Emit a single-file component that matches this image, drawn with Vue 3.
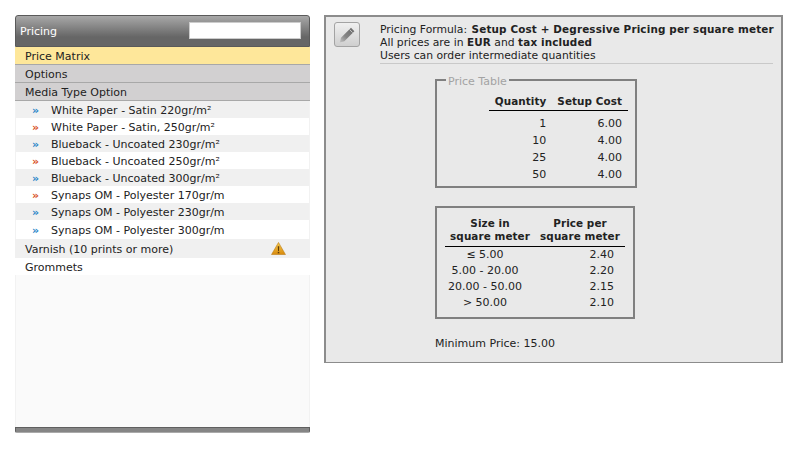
<template>
  <div class="page">
    <!-- left menu -->
    <div class="sidebar">
      <div class="side-head">
        <span class="side-title">Pricing</span>
        <input class="side-search" type="text" />
      </div>
      <div class="menu-row active">Price Matrix</div>
      <div class="menu-row group">Options</div>
      <div class="menu-row group">Media Type Option</div>
      <div v-for="(m, i) in media" :key="m.name" class="media-row" :class="{ odd: i % 2 == 0, tall: i == 7 }">
        <span class="arrows" :class="m.color">»</span>
        <span>{{ m.name }}</span>
      </div>
      <div class="plain-row odd">
        <span>Varnish (10 prints or more)</span>
        <svg class="warn" width="15" height="13" viewBox="0 0 16 14">
          <defs>
            <linearGradient id="warnfill" x1="0" y1="0" x2="0" y2="1">
              <stop offset="0" stop-color="#f6c94e" />
              <stop offset="1" stop-color="#d88a0c" />
            </linearGradient>
          </defs>
          <path d="M8 .5 15.5 13.5H.5Z" fill="url(#warnfill)" stroke="#b8770c" stroke-width=".6" stroke-linejoin="round" />
          <path d="M7.2 4.5h1.6L8.5 9.8h-1Z" fill="#5b3a08" />
          <rect x="7.2" y="10.6" width="1.6" height="1.6" fill="#5b3a08" />
        </svg>
      </div>
      <div class="plain-row">Grommets</div>
      <div class="side-body"></div>
      <div class="side-foot"></div>
    </div>

    <!-- main panel -->
    <div class="panel">
      <button class="edit-btn" type="button">
        <svg width="18" height="18" viewBox="0 0 18 18">
          <defs>
            <linearGradient id="pencilfill" x1="1" y1="0" x2="0" y2="1">
              <stop offset="0" stop-color="#6a6a6a" />
              <stop offset=".6" stop-color="#858585" />
              <stop offset="1" stop-color="#c4c4c4" />
            </linearGradient>
          </defs>
          <path d="M13 1.8 16.4 5.2 6.4 15.2 1.8 16.4 3 11.8Z" fill="url(#pencilfill)" />
          <path d="M11.6 3.6 14.6 6.6" stroke="#d8d8d8" stroke-width=".8" />
        </svg>
      </button>
      <div class="content">
        <div class="intro">
          <div>Pricing Formula: <b class="formula">Setup Cost + Degressive Pricing per square meter</b></div>
          <div>All prices are in <b>EUR</b> and <b>tax included</b></div>
          <div>Users can order intermediate quantities</div>
        </div>
        <div class="tables">
          <fieldset class="box first">
            <legend>Price Table</legend>
            <table class="qty">
              <thead>
                <tr><th>Quantity</th><th>Setup Cost</th></tr>
              </thead>
              <tbody>
                <tr v-for="r in setup" :key="r[0]"><td>{{ r[0] }}</td><td>{{ r[1] }}</td></tr>
              </tbody>
            </table>
          </fieldset>
          <div class="box second">
            <table class="size">
              <thead>
                <tr><th>Size in<br />square meter</th><th>Price per<br />square meter</th></tr>
              </thead>
              <tbody>
                <tr v-for="r in sizes" :key="r[0]"><td>{{ r[0] }}</td><td>{{ r[1] }}</td></tr>
              </tbody>
            </table>
          </div>
          <div class="minimum">Minimum Price: 15.00</div>
        </div>
      </div>
    </div>
  </div>
</template>

<script setup>
const media = [
  { name: 'White Paper - Satin 220gr/m²', color: 'blue' },
  { name: 'White Paper - Satin, 250gr/m²', color: 'red' },
  { name: 'Blueback - Uncoated 230gr/m²', color: 'blue' },
  { name: 'Blueback - Uncoated 250gr/m²', color: 'red' },
  { name: 'Blueback - Uncoated 300gr/m²', color: 'blue' },
  { name: 'Synaps OM - Polyester 170gr/m', color: 'red' },
  { name: 'Synaps OM - Polyester 230gr/m', color: 'blue' },
  { name: 'Synaps OM - Polyester 300gr/m', color: 'blue' },
]
const setup = [
  ['1', '6.00'],
  ['10', '4.00'],
  ['25', '4.00'],
  ['50', '4.00'],
]
const sizes = [
  ['≤ 5.00', '2.40'],
  ['5.00 - 20.00', '2.20'],
  ['20.00 - 50.00', '2.15'],
  ['> 50.00', '2.10'],
]
</script>

<style scoped>
.page {
  width: 800px;
  height: 450px;
  box-sizing: border-box;
  padding: 15px 17px 0 15px;
  display: flex;
  align-items: flex-start;
  gap: 14px;
  background: #fff;
  font-family: "DejaVu Sans", Verdana, sans-serif;
  font-size: 11px;
  color: #222;
  overflow: hidden;
}
b {
  font-size: 10.4px;
  letter-spacing: .15px;
}
th {
  font-size: 10.4px;
  letter-spacing: .08px;
}
.formula { margin-left: 1px; }

.sidebar {
  width: 295px;
  height: 418px;
  flex: none;
  display: flex;
  flex-direction: column;
}
.side-head {
  height: 32px;
  box-sizing: border-box;
  border: 1px solid #5a5a5a;
  border-radius: 3px 3px 0 0;
  background: linear-gradient(#a8a8a8, #666 70%, #666);
  display: flex;
  align-items: center;
  justify-content: space-between;
  padding: 1px 8px 0 4px;
}
.side-title {
  color: #fff;
  font-size: 11px;
}
.side-search {
  width: 112px;
  height: 17px;
  box-sizing: border-box;
  border: 1px solid #ccc;
  background: #fff;
  padding: 0;
  margin: 0 0 2px;
}
.menu-row {
  height: 18px;
  box-sizing: border-box;
  padding: 1px 0 0 10px;
  line-height: 17px;
  border-bottom: 1px solid #a8a8a8;
}
.menu-row.active { background: #fee79a; }
.menu-row.group { background: #d2d0d1; }
.media-row {
  height: 17px;
  box-sizing: border-box;
  padding-top: 1px;
  line-height: 17px;
  display: flex;
  border-left: 1px solid #f2f2f2;
  border-right: 1px solid #f2f2f2;
  background: #fff;
}
.media-row.odd { background: #f0f0f0; }
.media-row.tall { height: 19px; line-height: 19px; }
.arrows {
  width: 35px;
  flex: none;
  padding-left: 16px;
  box-sizing: border-box;
  font-weight: bold;
}
.arrows.blue { color: #2a86c8; }
.arrows.red { color: #d8501e; }
.plain-row {
  height: 17px;
  line-height: 17px;
  box-sizing: border-box;
  padding: 1px 24px 0 10px;
  display: flex;
  justify-content: space-between;
  align-items: center;
  background: #fff;
}
.plain-row.odd { background: #f0f0f0; height: 19px; }
.warn { flex: none; margin-top: -2px; }
.side-body {
  flex: 1;
  background: #fafafa;
  border-left: 1px solid #f2f2f2;
  border-right: 1px solid #f2f2f2;
}
.side-foot {
  height: 6px;
  box-sizing: border-box;
  border: 1px solid #5f5f5f;
  border-bottom-color: #aaa;
  background: #858585;
  border-radius: 0 0 2px 2px;
}

.panel {
  width: 459px;
  height: 348px;
  flex: none;
  box-sizing: border-box;
  border: 2px solid #8c8c8c;
  border-bottom-width: 1px;
  background: #e9e9e9;
  padding: 5px 8px 0 8px;
  display: flex;
  gap: 20px;
}
.edit-btn {
  width: 26px;
  height: 25px;
  flex: none;
  padding: 0;
  display: flex;
  align-items: center;
  justify-content: center;
  border: 1px solid #a3a3a3;
  border-radius: 3px;
  background: linear-gradient(#f0f0f0, #cfcfcf);
}
.content { flex: 1; min-width: 0; }
.intro {
  font-size: 10.8px;
  line-height: 13px;
  padding: 1px 0;
  border-bottom: 1px solid #c9c9c9;
  white-space: nowrap;
}
.tables { padding-left: 55px; }
.box {
  box-sizing: border-box;
  border: 2px solid #808080;
  margin: 0;
  background: transparent;
}
.first {
  width: 202px;
  height: 117px;
  margin-top: 7px;
  padding: 0;
}
.first legend {
  color: #a3a3a3;
  padding: 4px 2px 0;
  margin-left: 9px;
  line-height: 13px;
}
.second {
  width: 200px;
  height: 113px;
  margin-top: 18px;
}
table {
  border-collapse: collapse;
  border-spacing: 0;
}
th {
  font-weight: bold;
  border-bottom: 1px solid #000;
  line-height: 13px;
}
td { padding: 0; }
.qty {
  margin: 3px 7px 0 auto;
}
.qty th {
  text-align: right;
  padding: 4px 5px 2px 6px;
}
.qty th:last-child { padding-right: 6px; }
.qty td {
  text-align: right;
  padding: 0 5px 0 6px;
  line-height: 17px;
}
.qty td:last-child { padding-right: 6px; }
.qty tbody tr:first-child td { padding-top: 4px; }
.size {
  margin: 9px 8px 0 8px;
  width: 180px;
  table-layout: fixed;
}
.size th {
  text-align: center;
  padding: 0 0 3px;
}
.size td {
  line-height: 16px;
  text-align: center;
  padding-right: 10px;
}
.size td:last-child {
  text-align: right;
  padding-right: 11px;
}
.minimum {
  margin-top: 18px;
}
</style>
<style>
html, body { margin: 0; background: #fff; }
</style>
